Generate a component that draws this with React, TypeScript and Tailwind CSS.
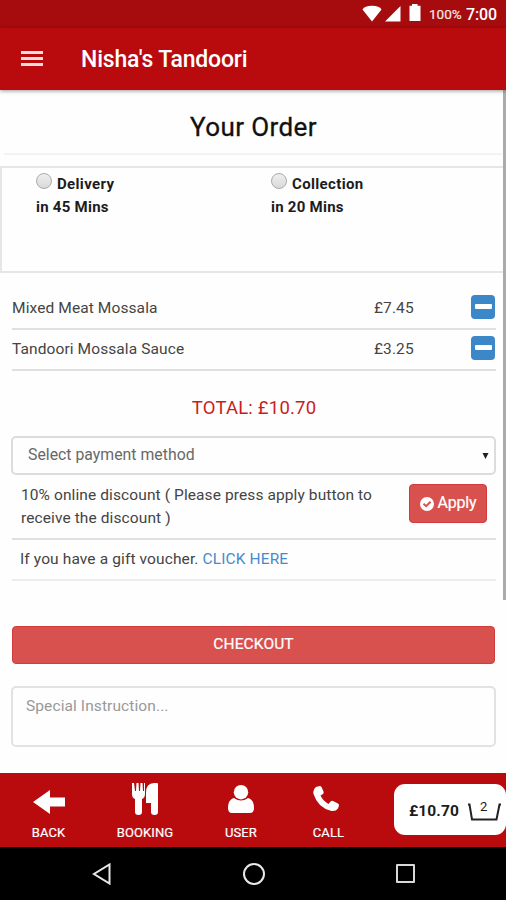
import React from "react";

const items = [
  { name: "Mixed Meat Mossala", price: "£7.45" },
  { name: "Tandoori Mossala Sauce", price: "£3.25" },
];

function StatusBar() {
  return (
    <div className="flex h-7 shrink-0 items-center bg-[#a60b0d] pl-[362px] text-white">
      <svg width="60" height="28" viewBox="0 0 60 28" fill="currentColor" className="shrink-0">
        <path d="M0.5 9.5C2 7 5 5.8 10 5.8S18 7 19.500 9.500L10 21.500Z" />
        <path d="M23 21.500L38.500 6V21.500Z" />
        <path d="M47.500 5.800H50V4H55.500V5.800H58.500V21H47.500Z" />
      </svg>
      <span className="ml-[7px] w-[37px] text-[13.5px] leading-7 whitespace-nowrap opacity-90 [-webkit-text-stroke:0.2px_white]">100%</span>
      <span className="pt-[2px] text-[16px] font-medium leading-7 whitespace-nowrap tracking-[-0.1px]">7:00</span>
    </div>
  );
}

function Header() {
  return (
    <header className="z-10 flex h-[62px] shrink-0 items-center bg-[#b90a0e] pl-[21px] text-white shadow-[0_1px_4px_rgba(0,0,0,0.4)]">
      <div className="flex w-[22px] flex-col gap-[3px] pb-0.5">
        <span className="h-[3px] bg-[#f8dcdc]" />
        <span className="h-[3px] bg-[#f8dcdc]" />
        <span className="h-[3px] bg-[#f8dcdc]" />
      </div>
      <h1 className="ml-[38px] pt-[2px] text-[23px] font-medium tracking-[-0.18px]">Nisha's Tandoori</h1>
    </header>
  );
}

function Choice({ label, time }: { label: string; time: string }) {
  return (
    <div className="w-[235px] text-[15px] font-bold text-[#1c1c1c]">
      <label className="flex h-[23px] items-center">
        <span className="mb-[7px] h-4 w-4 rounded-full border border-[#aaa] bg-linear-to-b from-[#eee] to-[#d9d9d9]" />
        <span className="ml-[5px] tracking-[0.35px]">{label}</span>
      </label>
      <div className="h-[22px] leading-[22px] tracking-[0.25px]">{time}</div>
    </div>
  );
}

function NavItem({ label, className, children }: { label: string; className: string; children: React.ReactNode }) {
  return (
    <div className={"flex flex-col items-center " + className}>
      <div className="flex h-[51px] items-center justify-center">{children}</div>
      <span className="pt-px text-[13px] leading-4 tracking-[0.1px] [-webkit-text-stroke:0.2px_white]">{label}</span>
    </div>
  );
}

export default function App() {
  return (
    <div className="relative flex h-[900px] w-[506px] flex-col overflow-hidden bg-[#fefefe] font-[Roboto,sans-serif]">
      <StatusBar />
      <Header />
      <main className="flex h-[683px] shrink-0 flex-col">
        <h2 className="mx-1 h-[65px] shrink-0 border-b-2 border-[#f3f3f3] pt-[11px] pl-px text-center text-[26px] leading-[52px] tracking-[0.4px] text-[#111]">
          <span className="[-webkit-text-stroke:0.3px_#111]">Your Order</span>
        </h2>
        <section className="mt-[11px] flex h-[107px] w-[506px] shrink-0 border-2 border-r-0 border-[#e6e6e6] pt-[5px] pl-[34px]">
          <Choice label="Delivery" time="in 45 Mins" />
          <Choice label="Collection" time="in 20 Mins" />
        </section>
        <section className="mr-[10px] ml-3 mt-[16px] shrink-0">
          {items.map((item) => (
            <div key={item.name} className="flex h-[41px] items-center border-b-2 border-[#e0e0e0] text-[15.5px] tracking-[0.1px] text-[#444]">
              <span className="w-[362px]">{item.name}</span>
              <span className="w-[97px]">{item.price}</span>
              <button className="mb-[4px] flex h-6 w-6 items-center justify-center rounded-[4px] bg-[#3b87c8]">
                <span className="h-[5px] w-[17px] rounded-[1px] bg-white" />
              </button>
            </div>
          ))}
        </section>
        <div className="mt-[21px] h-8 shrink-0 pl-[2px] text-center text-[18.5px] leading-8 tracking-[0.2px] text-[#ca1c20]">TOTAL: £10.70</div>
        <div className="mr-[10px] ml-[11px] mt-[12px] flex h-[39px] shrink-0 items-center justify-between rounded-[5px] border-2 border-[#dcdcdc] pr-[5px] pl-[15px] text-[15.8px] text-[#686868]">
          <span className="pb-px tracking-[0.02px]">Select payment method</span>
          <svg width="7" height="8" viewBox="0 0 7 8" fill="#222"><path d="M.5 1H6.500L3.500 7Z" /></svg>
        </div>
        <section className="mr-[10px] ml-3 flex h-[65px] shrink-0 border-b-2 border-[#e0e0e0] pt-[9px] pl-[9px] text-[15.5px] leading-[22.5px] tracking-[0.1px] text-[#444]">
          <p className="w-[388px] whitespace-nowrap">10% online discount ( Please press apply button to<br />receive the discount )</p>
          <button className="flex h-[39px] w-[78px] shrink-0 items-center justify-center rounded-[4px] border border-[#cf3c3a] bg-[#d9514e] text-[16px] text-white">
            <svg width="14" height="14" viewBox="0 0 14 14" className="mr-[4px]"><circle cx="7" cy="7" r="7" fill="white" /><path d="M3.500 6.800L6.100 9.200L10.600 4.800" fill="none" stroke="#d9514e" strokeWidth="2" /></svg>
            <span className="tracking-[-0.2px] [-webkit-text-stroke:0.2px_white]">Apply</span>
          </button>
        </section>
        <div className="mr-[10px] ml-3 h-[41px] shrink-0 border-b-2 border-[#ececec] pl-[8px] text-[15.5px] leading-[38px] tracking-[0.12px] text-[#444]">
          If you have a gift voucher. <a className="text-[#478bca]">CLICK HERE</a>
        </div>
        <button className="mr-[11px] ml-3 mt-[45px] h-[38px] shrink-0 rounded-[4px] border border-[#cf3c3a] bg-[#d9514e] text-[15.5px] tracking-[0.1px] text-white [-webkit-text-stroke:0.2px_white]">CHECKOUT</button>
        <div className="mr-[10px] ml-[11px] mt-[22px] h-[61px] shrink-0 rounded-[5px] border-2 border-[#e2e2e2] pt-[6px] pl-[13px] text-[15.5px] leading-6 tracking-[0.1px] text-[#999]">Special Instruction...</div>
      </main>
      <footer className="flex h-[74px] shrink-0 bg-[#b90a0e] text-white">
        <NavItem label="BACK" className="w-[97px]">
          <svg width="32" height="24" viewBox="0 0 32 24" fill="white" className="mt-[6px]"><path d="M0 12L17 0V7.500H32V16.500H17V24Z" /></svg>
        </NavItem>
        <NavItem label="BOOKING" className="w-[96px]">
          <svg width="26" height="32" viewBox="0 0 26 32" fill="white"><path d="M0 0H2L3 8H4L4.500 0H6.500L7 8H8L8.500 0H10.500L11 8H12L12 0H13V11Q13 15 10 16V29Q10 32 6.500 32T3 29V16Q0 15 0 11ZM26 1V29Q26 32 22.500 32T19 29V20H14V10Q14 0 22 0H25Q26 0 26 1Z" /></svg>
        </NavItem>
        <NavItem label="USER" className="w-[96px]">
          <svg width="26" height="28" viewBox="0 0 26 28" fill="white"><circle cx="13" cy="7.200" r="7.200" /><path d="M6 13Q13 18 20 13C24 14 26 17.500 26 23Q26 28 22 28H4Q0 28 0 23C0 17.500 2 14 6 13Z" /></svg>
        </NavItem>
        <NavItem label="CALL" className="w-[79px]">
          <svg width="26" height="26" viewBox="0 0 26 26" fill="white" className="-ml-[6px]"><path d="M3 1L6.500 0Q8 0 8.500 1L10.500 5.500Q11 7 10 8L7.500 9.500Q10 15 15.500 18L17.500 15.500Q18.500 14.500 20 15L25 17.500Q26 18 26 19.500L25 22.500Q23 25.500 18.500 25Q5 22 .5 8Q-.5 3.500 3 1Z" /></svg>
        </NavItem>
        <div className="mt-[11px] ml-[26px] flex h-[51px] w-[112px] shrink-0 items-center rounded-[11px] bg-white pt-[4px] pl-[15px] text-[#1c1c1c]">
          <span className="w-[58px] text-[15.5px] font-bold tracking-[0.1px]">£10.70</span>
          <div className="relative h-[18px] w-[34px]">
            <svg width="34" height="18" viewBox="0 0 34 18" fill="none" stroke="#222" strokeWidth="2"><path d="M1 1.500H2.500L5 16.500H29.500L32.500 1.500H34" /></svg>
            <span className="absolute -top-[4px] left-[13px] text-[13px] leading-4">2</span>
          </div>
        </div>
      </footer>
      <nav className="flex h-[53px] shrink-0 items-center bg-black pl-[92px]">
        <svg width="19" height="22" viewBox="0 0 19 22" fill="none" stroke="#e8e8e8" strokeWidth="2"><path d="M17.500 1.500V20.500L2 11Z" /></svg>
        <span className="ml-[132px] h-[22px] w-[22px] rounded-full border-2 border-[#e8e8e8]" />
        <span className="ml-[131px] h-[19px] w-[19px] rounded-[1px] border-[2.5px] border-[#d8d8d8]" />
      </nav>
      <div className="absolute top-[90px] right-0 h-[510px] w-[3px] bg-[#ababab]" />
    </div>
  );
}
